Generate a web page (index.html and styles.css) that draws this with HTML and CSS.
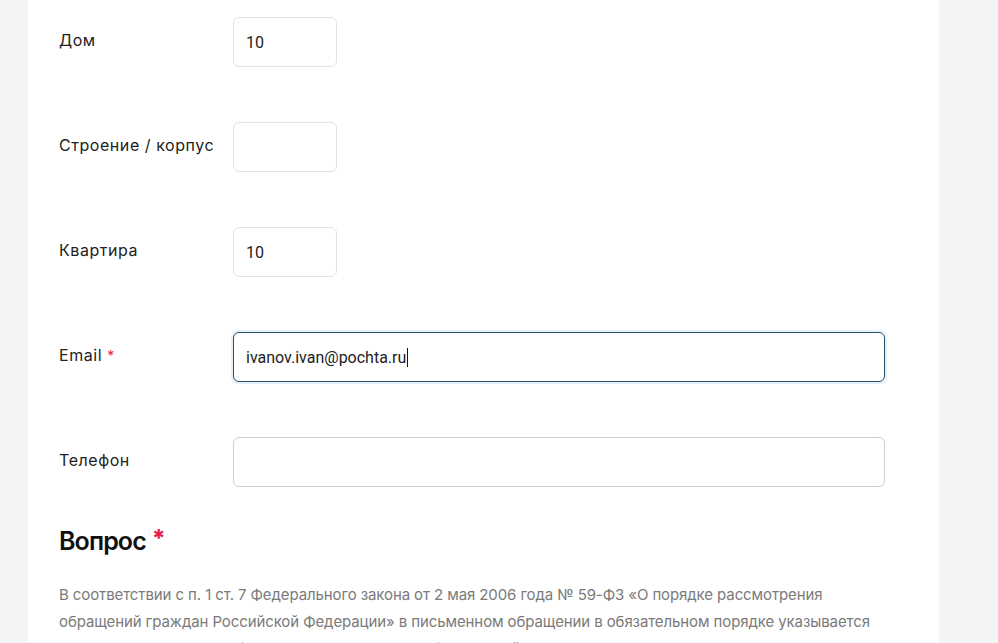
FILE: index.html
```html
<!DOCTYPE html>
<html lang="ru">
<head>
<meta charset="utf-8">
<title>Форма обращения</title>
<link rel="stylesheet" href="styles.css">
</head>
<body>
<div class="page">
  <main class="panel">
    <div class="fields">
      <div class="row">
        <label class="label">Дом</label>
        <div class="input short"><span class="value">10</span></div>
      </div>
      <div class="row">
        <label class="label">Строение / корпус</label>
        <div class="input short"></div>
      </div>
      <div class="row">
        <label class="label">Квартира</label>
        <div class="input short"><span class="value">10</span></div>
      </div>
      <div class="row">
        <label class="label">Email <span class="req">*</span></label>
        <div class="input wide focus"><span class="value">ivanov.ivan@pochta.ru</span><span class="caret"></span></div>
      </div>
      <div class="row">
        <label class="label">Телефон</label>
        <div class="input wide"></div>
      </div>
    </div>
    <h2 class="heading"><span class="heading-text">Вопрос</span><span class="req-big">*</span></h2>
    <p class="note">В соответствии с п. 1 ст. 7 Федерального закона от 2 мая 2006 года № 59-ФЗ «О порядке рассмотрения обращений граждан Российской Федерации» в письменном обращении в обязательном порядке указывается фамилия, имя, отчество (последнее — при наличии), почтовый адрес, по которому должен быть направлен ответ</p>
  </main>
</div>
</body>
</html>
```
FILE: styles.css
```css
html, body {
  margin: 0;
  padding: 0;
  height: 100%;
  overflow: hidden;
}
body {
  background: #f3f4f6;
  font-family: Inter, "Noto Sans", sans-serif;
  color: #222;
}
.page {
  display: flex;
  height: 100%;
}
.panel {
  margin-left: 28px;
  width: 911px;
  background: #fff;
  padding: 17px 0 0 31px;
  box-sizing: border-box;
}
.fields {
  display: flex;
  flex-direction: column;
  gap: 55px;
}
.row {
  display: grid;
  grid-template-columns: 174px auto;
  align-items: start;
}
.label {
  font-size: 16px;
  line-height: 24px;
  padding-top: 11px;
  color: #222;
  letter-spacing: 0.55px;
}
.req {
  color: #e0224f;
  font-size: 14px;
}
.input {
  height: 50px;
  box-sizing: border-box;
  border: 1px solid #e2e2e2;
  border-radius: 6px;
  display: flex;
  align-items: center;
  padding: 0 12px;
  font-family: Roboto, "Liberation Sans", sans-serif;
  font-size: 16px;
  color: #222;
}
.input.short { width: 104px; }
.input.wide { width: 652px; border-color: #cfcfcf; }
.input.focus {
  border-color: #2c5066;
  box-shadow: 0 0 0 2px rgba(200, 225, 245, 0.5);
}
.value { padding-top: 1px; }
.caret {
  display: inline-block;
  width: 1px;
  height: 19px;
  background: #111;
  margin-left: 1px;
}
.heading {
  margin: 40px 0 0 0;
  font-size: 25px;
  line-height: 28px;
  font-weight: 600;
  color: #111;
  display: flex;
  align-items: flex-start;
  gap: 6px;
}
.heading-text {
  letter-spacing: -0.9px;
}
.req-big {
  color: #e0224f;
  font-size: 24px;
  font-weight: 800;
  line-height: 24px;
}
.note {
  margin: 26px 0 0 0;
  width: 826px;
  font-size: 15px;
  line-height: 27px;
  color: #7a7a7a;
  letter-spacing: -0.1px;
}
```
